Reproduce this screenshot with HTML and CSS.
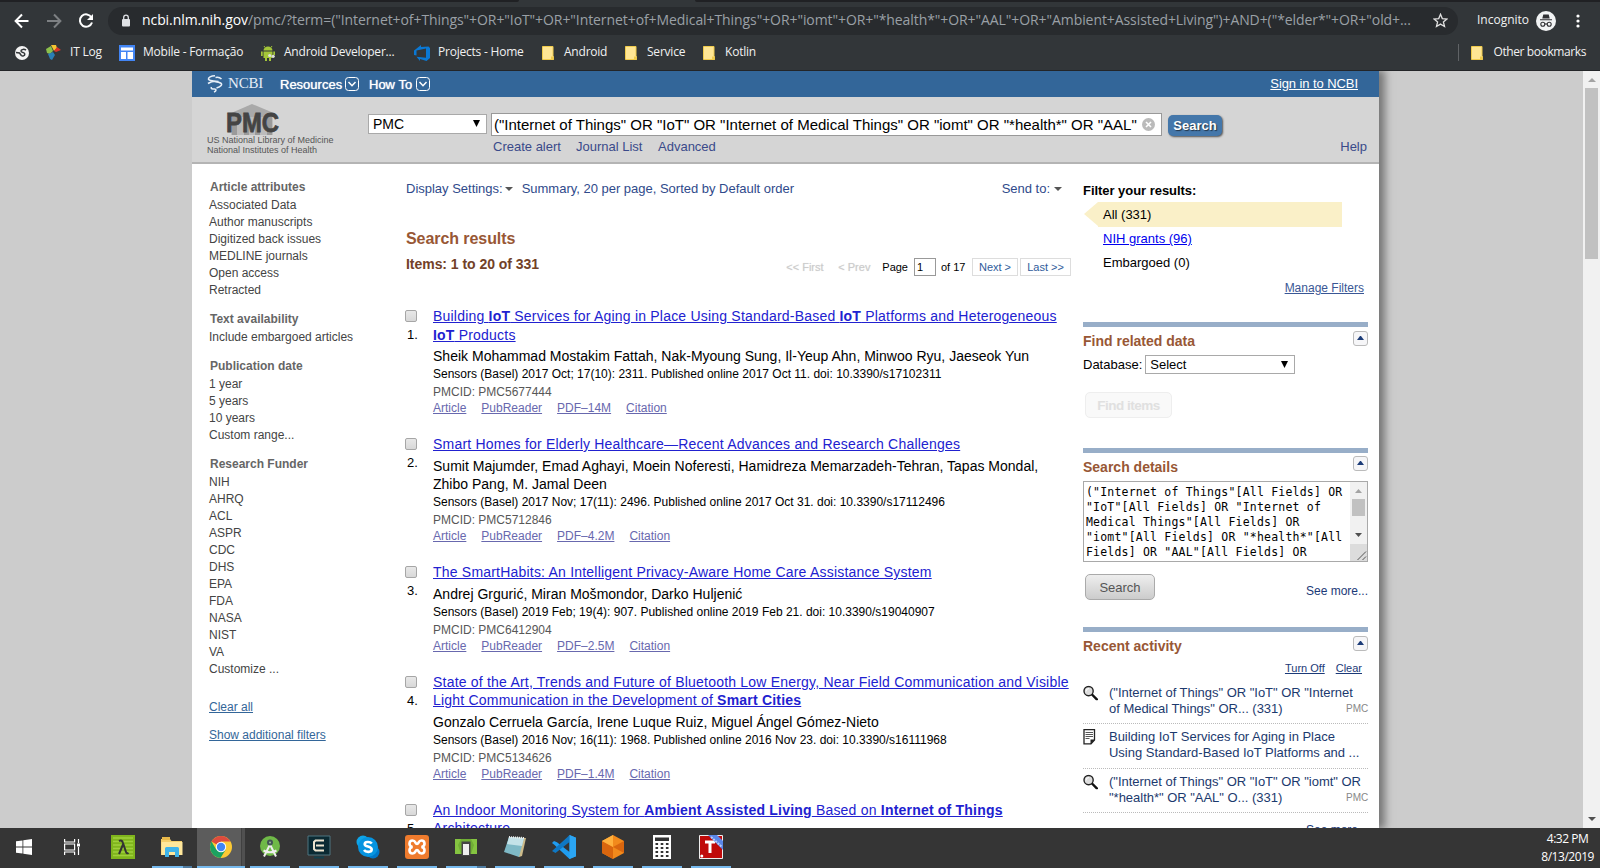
FILE: index.html
```html
<!DOCTYPE html>
<html lang="en">
<head>
<meta charset="utf-8">
<title>Search results - PMC - NCBI</title>
<link rel="stylesheet" href="styles.css">
</head>
<body>
<svg class="defs" width="0" height="0">
  <symbol id="folder" viewBox="0 0 12 14"><path d="M.5.5h10.500v9l.6 1v3H.5z" fill="#ffe694" stroke="#f0cb4c"/><path d="M9 10.500h2.500V14H9z" fill="#f0cb4c"/></symbol>
  <symbol id="mag" viewBox="0 0 15 15"><path d="M8.500 8.500l5.300 5.300" stroke="#111" stroke-width="2.400" stroke-linecap="round"/><circle cx="5.600" cy="5.600" r="4.600" fill="#ddd" stroke="#222" stroke-width="1.400"/><path d="M3 6a3 3 0 0 1 3-3" stroke="#fff" fill="none"/></symbol>
  <symbol id="drop" viewBox="0 0 14 14"><rect x=".5" y=".5" width="13" height="13" rx="3" fill="none" stroke="#fff"/><path d="M3.500 5l3.500 3.700L10.500 5" fill="none" stroke="#fff" stroke-width="1.500"/></symbol>
  <symbol id="arrow" viewBox="0 0 7 7"><path d="M0 0h7L3.500 7z" fill="#000"/></symbol>
</svg>

<div class="browser">
  <div class="tabstrip"><i class="tab-l"></i><i class="tab-r"></i></div>
  <div class="toolbar">
    <svg class="nav" width="100" height="28" viewBox="0 0 100 28" fill="none" stroke-width="2">
      <path d="M28.500 14H16M22 7.500L15.600 14l6.400 6.500" stroke="#fff"/>
      <path d="M47 14h12.500M54 7.500l6.400 6.500-6.400 6.500" stroke="#7d8083"/>
      <path d="M91.500 10.500A6.200 6.200 0 1 0 92 15.500" stroke="#fff"/><path d="M93 7v6h-6z" fill="#fff"/>
    </svg>
    <div class="omnibox">
      <svg width="10" height="13" viewBox="0 0 10 13"><rect x="1" y="5" width="8" height="7.500" rx="1" fill="#dfe1e5"/><path d="M2.700 6V3.500a2.300 2.300 0 0 1 4.600 0V6" fill="none" stroke="#dfe1e5" stroke-width="1.300"/></svg>
      <span class="url"><b>ncbi.nlm.nih.gov</b>/pmc/?term=("Internet+of+Things"+OR+"IoT"+OR+"Internet+of+Medical+Things"+OR+"iomt"+OR+"*health*"+OR+"AAL"+OR+"Ambient+Assisted+Living")+AND+("*elder*"+OR+"old+...</span>
      <svg class="star" width="15" height="15" viewBox="0 0 15 15"><path d="M7.500 1.300l1.800 4.300 4.600.4-3.500 3 1.100 4.500-4-2.400-4 2.400L4.600 9 1.100 6l4.600-.4z" fill="none" stroke="#e0e0e0" stroke-width="1.300"/></svg>
    </div>
    <span class="incognito">Incognito</span>
    <svg class="avatar" width="20" height="20" viewBox="0 0 20 20"><circle cx="10" cy="10" r="10" fill="#f1f3f4"/><path d="M4 9.300h12v-1H4zM6.300 7.500l1-4h5.400l1 4z" fill="#303134"/><g fill="none" stroke="#303134" stroke-width="1.100"><circle cx="6.800" cy="13.300" r="2"/><circle cx="13.200" cy="13.300" r="2"/><path d="M8.800 13h2.400"/></g></svg>
    <svg class="dots" width="4" height="16" viewBox="0 0 4 16" fill="#fff"><circle cx="2" cy="3" r="1.600"/><circle cx="2" cy="8" r="1.600"/><circle cx="2" cy="13" r="1.600"/></svg>
  </div>
  <div class="bookmarks">
    <span class="bm bm-globe"><svg width="14" height="14" viewBox="0 0 14 14"><circle cx="7" cy="7" r="7" fill="#f4f4f4"/><path d="M11 4.200C9.500 3 6 3 6 5s3.800 1 3.800 3-2.300 2.500-3.500 1.500L4.500 7 1 6.500" stroke="#323639" stroke-width="1.500" fill="none"/></svg></span>
    <span class="bm bm-itlog"><svg width="16" height="15" viewBox="0 0 16 15"><path d="M0 4l5-3 2 5-3 3-3-1z" fill="#8cc04b"/><path d="M5 0h5l1 3-3 3z" fill="#f4c430"/><path d="M11 2l4 3-5 2-2-1z" fill="#d8352a"/><path d="M2 9l5-2 2 3-3 5-2-1z" fill="#2b7fb5"/></svg><span>IT Log</span></span>
    <span class="bm bm-mobile"><svg width="16" height="16" viewBox="0 0 16 16"><path d="M0 0h16v16H0z" fill="#4285f4"/><path d="M2 2.500h12v3H2zM2 7h5v7H2zM8.500 7H14v7H8.500z" fill="#fff"/></svg><span>Mobile - Formação</span></span>
    <span class="bm bm-dev"><svg width="14" height="16" viewBox="0 0 14 16"><path d="M3 1l1 1.500M11 1l-1 1.500" stroke="#a4c639"/><path d="M2.500 5.500a4.500 4 0 0 1 9 0zM2.500 6.500h9V13h-9zM0 6.500h1.700V11H0zM12.300 6.500H14V10h-1.700zM4 13h2v3H4zM8 13h2v3H8z" fill="#a4c639"/><circle cx="8.700" cy="10.500" r="1.600" fill="#ddd"/><circle cx="12.200" cy="11.300" r="1.600" fill="#ddd"/></svg><span>Android Developer...</span></span>
    <span class="bm bm-proj"><svg width="16" height="16" viewBox="0 0 16 16"><path d="M0 5.500L2 4l5-4v2l7.500-.5L16 3v10l-3.500 3L6 14v2l-3.500-4.200 9.500.9V3.500L2.500 5.600v5L0 10z" fill="#0a78d4"/></svg><span>Projects - Home</span></span>
    <span class="bm bm-and"><svg width="12" height="14"><use href="#folder"/></svg><span>Android</span></span>
    <span class="bm bm-serv"><svg width="12" height="14"><use href="#folder"/></svg><span>Service</span></span>
    <span class="bm bm-kot"><svg width="12" height="14"><use href="#folder"/></svg><span>Kotlin</span></span>
    <span class="bm bm-other"><svg width="12" height="14"><use href="#folder"/></svg><span>Other bookmarks</span></span>
  </div>
</div>

<div class="viewport">
  <div class="page">
    <div class="ncbi-bar">
      <svg width="16" height="18" viewBox="0 0 16 18" fill="none" stroke="#e6eef7" stroke-width="1.600"><path d="M8 .8C4 .8 1 2.500 1.500 4.200S11 6.500 13.500 8 14 11.500 9.500 13M1 8.500C4 6.500 8 6 11.500 6.500M14.500 4c-2-2-4-2-6-1.500M4.500 12c-1 2 1 2 3 2s2 2-.5 3"/></svg>
      <span class="ncbi">NCBI</span>
      <span class="menu res">Resources</span><svg width="14" height="14"><use href="#drop"/></svg>
      <span class="menu how">How To</span><svg width="14" height="14"><use href="#drop"/></svg>
      <a class="signin">Sign in to NCBI</a>
    </div>
    <div class="header">
      <div class="brand">
        <svg width="56" height="31" viewBox="0 0 56 31"><path d="M26 0L50 10v3H3v-3z" fill="#a9a9a9"/><path d="M5 13h42v18H5z" fill="#bcbcbc"/><path d="M6 13h5v18H6zM18 13h5v18h-5zM29 13h5v18h-5zM41 13h5v18h-5z" fill="#9a9a9a"/><text class="pmc" x="0" y="27.500" textLength="53" lengthAdjust="spacingAndGlyphs">PMC</text></svg>
        <div>US National Library of Medicine</div>
        <div>National Institutes of Health</div>
      </div>
      <div class="search">
        <div class="search-row">
          <div class="select db">PMC<svg width="7" height="7"><use href="#arrow"/></svg></div>
          <div class="query"><span>("Internet of Things" OR "IoT" OR "Internet of Medical Things" OR "iomt" OR "*health*" OR "AAL"</span>
            <svg width="13" height="13" viewBox="0 0 13 13"><circle cx="6.500" cy="6.500" r="6.500" fill="#bbb"/><path d="M4 4l5 5M9 4L4 9" stroke="#fff" stroke-width="1.600"/></svg></div>
          <div class="go">Search</div>
        </div>
        <div class="search-links"><span class="l1">Create alert</span><span class="l2">Journal List</span><span class="l3">Advanced</span><span class="help">Help</span></div>
      </div>
    </div>
    <div class="columns">
      <div class="facets">
        <h3>Article attributes</h3><p>Associated Data</p><p>Author manuscripts</p><p>Digitized back issues</p><p>MEDLINE journals</p><p>Open access</p><p>Retracted</p>
        <h3>Text availability</h3><p>Include embargoed articles</p>
        <h3>Publication date</h3><p>1 year</p><p>5 years</p><p>10 years</p><p>Custom range...</p>
        <h3>Research Funder</h3><p>NIH</p><p>AHRQ</p><p>ACL</p><p>ASPR</p><p>CDC</p><p>DHS</p><p>EPA</p><p>FDA</p><p>NASA</p><p>NIST</p><p>VA</p><p>Customize ...</p>
        <a class="clear-all">Clear all</a><a class="show-more">Show additional filters</a>
      </div>
      <div class="results">
        <div class="display"><span>Display Settings:</span><i class="caret"></i><span>Summary, 20 per page, Sorted by Default order</span><span class="send">Send to:</span><i class="caret"></i></div>
        <h2>Search results</h2>
        <div class="count-row"><h4>Items: 1 to 20 of 331</h4>
          <div class="pager"><span class="off first">&lt;&lt; First</span><span class="off prev">&lt; Prev</span><span>Page</span><span class="pgbox">1</span><span class="of">of 17</span><span class="pgbtn next">Next &gt;</span><span class="pgbtn last">Last &gt;&gt;</span></div>
        </div>
        <div class="item"><div class="num"><i class="cb"></i>1.</div><div class="body">
          <a class="title">Building <b>IoT</b> Services for Aging in Place Using Standard-Based <b>IoT</b> Platforms and Heterogeneous<br><b>IoT</b> Products</a>
          <div class="authors">Sheik Mohammad Mostakim Fattah, Nak-Myoung Sung, Il-Yeup Ahn, Minwoo Ryu, Jaeseok Yun</div>
          <div class="src">Sensors (Basel) 2017 Oct; 17(10): 2311. Published online 2017 Oct 11. doi: 10.3390/s17102311</div>
          <div class="pmcid">PMCID: PMC5677444</div>
          <div class="links"><a>Article</a><a>PubReader</a><a>PDF–14M</a><a>Citation</a></div></div></div>
        <div class="item"><div class="num"><i class="cb"></i>2.</div><div class="body">
          <a class="title">Smart Homes for Elderly Healthcare—Recent Advances and Research Challenges</a>
          <div class="authors">Sumit Majumder, Emad Aghayi, Moein Noferesti, Hamidreza Memarzadeh-Tehran, Tapas Mondal,<br>Zhibo Pang, M. Jamal Deen</div>
          <div class="src">Sensors (Basel) 2017 Nov; 17(11): 2496. Published online 2017 Oct 31. doi: 10.3390/s17112496</div>
          <div class="pmcid">PMCID: PMC5712846</div>
          <div class="links"><a>Article</a><a>PubReader</a><a>PDF–4.2M</a><a>Citation</a></div></div></div>
        <div class="item"><div class="num"><i class="cb"></i>3.</div><div class="body">
          <a class="title">The SmartHabits: An Intelligent Privacy-Aware Home Care Assistance System</a>
          <div class="authors">Andrej Grgurić, Miran Mošmondor, Darko Huljenić</div>
          <div class="src">Sensors (Basel) 2019 Feb; 19(4): 907. Published online 2019 Feb 21. doi: 10.3390/s19040907</div>
          <div class="pmcid">PMCID: PMC6412904</div>
          <div class="links"><a>Article</a><a>PubReader</a><a>PDF–2.5M</a><a>Citation</a></div></div></div>
        <div class="item"><div class="num"><i class="cb"></i>4.</div><div class="body">
          <a class="title">State of the Art, Trends and Future of Bluetooth Low Energy, Near Field Communication and Visible<br>Light Communication in the Development of <b>Smart Cities</b></a>
          <div class="authors">Gonzalo Cerruela García, Irene Luque Ruiz, Miguel Ángel Gómez-Nieto</div>
          <div class="src">Sensors (Basel) 2016 Nov; 16(11): 1968. Published online 2016 Nov 23. doi: 10.3390/s16111968</div>
          <div class="pmcid">PMCID: PMC5134626</div>
          <div class="links"><a>Article</a><a>PubReader</a><a>PDF–1.4M</a><a>Citation</a></div></div></div>
        <div class="item"><div class="num"><i class="cb"></i>5.</div><div class="body">
          <a class="title">An Indoor Monitoring System for <b>Ambient Assisted Living</b> Based on <b>Internet of Things</b><br>Architecture</a></div></div>
      </div>
      <div class="side">
        <h5>Filter your results:</h5>
        <div class="filter on">All (331)</div>
        <div class="filter"><a>NIH grants (96)</a></div>
        <div class="filter">Embargoed (0)</div>
        <a class="manage">Manage Filters</a>
        <div class="portlet related">
          <div class="phead"><span>Find related data</span><i class="toggle"></i></div>
          <div class="dbrow">Database: <div class="select rel">Select<svg width="7" height="7"><use href="#arrow"/></svg></div></div>
          <div class="btn disabled">Find items</div>
        </div>
        <div class="portlet details">
          <div class="phead"><span>Search details</span><i class="toggle"></i></div>
          <div class="textarea"><pre>("Internet of Things"[All Fields] OR
"IoT"[All Fields] OR "Internet of
Medical Things"[All Fields] OR
"iomt"[All Fields] OR "*health*"[All
Fields] OR "AAL"[All Fields] OR</pre>
            <svg width="17" height="79" viewBox="0 0 17 79"><path d="M0 0h17v62H0z" fill="#f1f1f1"/><path d="M0 62h17v17H0z" fill="#dcdcdc"/><path d="M2 17h13v17H2z" fill="#c1c1c1"/><path d="M5 11h7L8.500 7z" fill="#a3a3a3"/><path d="M5 51h7l-3.500 4z" fill="#505050"/><path d="M7.500 78L16 69.500M12.500 78l3.500-3.500" stroke="#555"/></svg></div>
          <div class="drow"><div class="btn">Search</div><span>See more...</span></div>
        </div>
        <div class="portlet recent">
          <div class="phead"><span>Recent activity</span><i class="toggle"></i></div>
          <div class="rlinks"><a>Turn Off</a><a>Clear</a></div>
          <div class="act"><svg width="15" height="16" viewBox="0 0 15 15"><use href="#mag"/></svg><div>("Internet of Things" OR "IoT" OR "Internet<br>of Medical Things" OR... (331)</div><em>PMC</em></div>
          <div class="act"><svg width="15" height="16" viewBox="0 0 15 16"><path d="M1 .700h10.500V11L8 14.800H1z" fill="#fff" stroke="#222" stroke-width="1.300"/><path d="M2.500 3.500h7.500M2.500 5.500h7.500M2.500 7.500h7.500M2.500 9.500h4" stroke="#555"/><path d="M7.500 15v-4.500H12z" fill="#222"/></svg><div>Building IoT Services for Aging in Place<br>Using Standard-Based IoT Platforms and ...</div></div>
          <div class="act"><svg width="15" height="16" viewBox="0 0 15 15"><use href="#mag"/></svg><div>("Internet of Things" OR "IoT" OR "iomt" OR<br>"*health*" OR "AAL" O... (331)</div><em>PMC</em></div>
          <div class="more">See more...</div>
        </div>
      </div>
    </div>
  </div>
  <div class="scrollbar"><i class="up"></i><i class="thumb"></i><i class="down"></i></div>
</div>

<div class="taskbar">
  <span class="app start"><svg width="16" height="16" viewBox="0 0 16 16" fill="#fff"><path d="M0 2.300l6.500-.9v6.100H0zM7.300 1.200L16 0v7.500H7.300zM0 8.400h6.500v6.200L0 13.700zM7.300 8.400H16V16l-8.700-1.200z"/></svg></span>
  <span class="app view"><svg width="16" height="16" viewBox="0 0 16 16" fill="none" stroke="#fff" stroke-width="1.200"><path d="M.6 0v3h10V0M.6 16v-3h10v3M.6 5h10v6H.6zM14.500 0v4M14.500 8v8"/><path d="M13 4.500h3v3h-3z" fill="#fff" stroke="none"/></svg></span>
  <span class="app"><svg width="24" height="24" viewBox="0 0 24 24"><path d="M0 0h24v24H0z" fill="#7fb51c"/><path d="M2 3h20M2 6.500h20M2 10h20M2 13.500h20M2 17h20M2 20.500h20" stroke="#a0cf3c" stroke-width="1.500"/><path d="M8 6q3-1.500 4 2l3 9q.7 2 2.500.8M12 9.500L8 19" fill="none" stroke="#333" stroke-width="2"/></svg></span>
  <span class="app run dual"><svg width="24" height="20" viewBox="0 0 24 20"><path d="M1 2h9l1.500 2H22v14H1z" fill="#f5cf6b"/><path d="M2 0h8v3H2z" fill="#e8b94a"/><path d="M1.500 5h21v13h-21z" fill="#ffe79b"/><path d="M5 20v-8.500q0-1.500 1.500-1.500h11q1.500 0 1.500 1.500V20h-4v-5H9v5z" fill="#3fb4ea"/></svg></span>
  <span class="app run active"><svg width="24" height="24" viewBox="0 0 24 24"><circle cx="12" cy="12" r="11" fill="#fcc934"/><path d="M12 12L2.500 6.500A11 11 0 0 1 21.500 6.500H12z" fill="#dd4b3e"/><path d="M2.500 6.500A11 11 0 0 0 11.500 23L16.800 14.500 7.200 14.500z" fill="#1ba261"/><circle cx="12" cy="12" r="5.200" fill="#fff"/><circle cx="12" cy="12" r="4.200" fill="#4285f4"/></svg></span>
  <span class="app run"><svg width="22" height="24" viewBox="0 0 22 24"><circle cx="11" cy="11" r="10" fill="#6fb947"/><path d="M11 9.500L5 21.500M11 9.500l6 12M4.500 15.500q6.500 3.500 13 0" fill="none" stroke="#eee" stroke-width="2"/><circle cx="11" cy="7.500" r="3" fill="#455"/><circle cx="11" cy="7.500" r="1" fill="#9b9"/></svg></span>
  <span class="app run"><svg width="24" height="24" viewBox="0 0 24 24"><path d="M1 1h22v19H1z" fill="#0b2a33" stroke="#4e7480"/><path d="M17 5.500H8.500L7 7v7l1.500 1.500H17M9 10.500h8" fill="none" stroke="#eee4cf" stroke-width="2"/><path d="M7 22.500h10" stroke="#13404d" stroke-width="2"/></svg></span>
  <span class="app run"><svg width="24" height="24" viewBox="0 0 24 24"><circle cx="7" cy="7" r="6.500" fill="#0ea5e9"/><circle cx="17" cy="17" r="6.500" fill="#0077c8"/><circle cx="12" cy="12" r="10" fill="#0694e0"/><path d="M15.800 8.500C14 6.200 8.500 6.500 8.700 9.300c.2 3 7 1.600 7 5.200 0 3-5.800 3.200-7.700.5" fill="none" stroke="#fff" stroke-width="2.600"/></svg></span>
  <span class="app run"><svg width="24" height="24" viewBox="0 0 24 24"><rect width="24" height="24" rx="3" fill="#ef7b2d"/><path d="M7.500 12C3 11 4 5.500 7.500 5.500S10 9 12 9s1-3.500 4.500-3.500S21 11 16.500 12c4.500 1 3.500 6.500 0 6.500S14 15 12 15s-1 3.500-4.500 3.500S3 13 7.500 12z" fill="none" stroke="#fff" stroke-width="2.600"/></svg></span>
  <span class="app run dual"><svg width="22" height="20" viewBox="0 0 22 20"><path d="M0 2h22v15H0z" fill="#6fae34"/><path d="M0 2h6l-3 6 3 9H0zM22 2h-6l3 6-3 9h6z" fill="#85c441"/><path d="M6.500 4.500h9V19h-9z" fill="#444"/><path d="M8 7h6v11H8z" fill="#eee"/></svg></span>
  <span class="app run"><svg width="24" height="24" viewBox="0 0 24 24"><path d="M6 2l17 1-4 18-3 1z" fill="#cdbb8a"/><path d="M6 2l15 1-5 19L1 17z" fill="#7fb9c6"/><path d="M6 2l15 1-2 8-15-2z" fill="#c4e2e8"/><path d="M6 2l15 1" stroke="#eee" stroke-width="2" stroke-dasharray="1 1"/></svg></span>
  <span class="app run"><svg width="24" height="24" viewBox="0 0 24 24"><path d="M17.500 0L24 2.800v18.400L17.500 24 2 9.500 0 8l2-2 3 1.300L17.500 17z" fill="#1f9cf0"/><path d="M17.500 0v7L3.500 18 0 16l15-13.500z" fill="#0f78c4"/><path d="M17.500 0L24 2.800v18.400L17.500 24z" fill="#2ba5f3"/></svg></span>
  <span class="app run"><svg width="22" height="24" viewBox="0 0 22 24"><path d="M11 0l11 6v12l-11 6-11-6V6z" fill="#f28a1c"/><path d="M11 12L22 6v12zM11 12L0 18l11 6zM11 12L0 6v12z" fill="#d9660e"/><path d="M11 12L0 6l11-6z" fill="#ffb13d"/></svg></span>
  <span class="app run"><svg width="18" height="24" viewBox="0 0 18 24"><path d="M0 0h18v24H0z" fill="#fff"/><path d="M2 2.500h14v3.500H2z" fill="#333"/><path d="M2.500 9h13M2.500 13h13M2.500 17h13M2.500 21h13" stroke="#333" stroke-width="2.200" stroke-dasharray="2.600 2.600"/></svg></span>
  <span class="app run"><svg width="24" height="24" viewBox="0 0 24 24"><path d="M.5.5h23v23H.5z" fill="#c00a0a" stroke="#eee"/><path d="M6 7h10M11 7v11" stroke="#fff" stroke-width="3"/><path d="M9 0h9l6 6v9z" fill="#5a86e8"/><path d="M12 2l11 10" stroke="#b8cdf8" stroke-dasharray="2 1" stroke-width="2"/><circle cx="2.800" cy="21" r="1.500" fill="#fff"/></svg></span>
  <div class="clock"><span>4:32 PM</span><span>8/13/2019</span></div>
</div>
</body>
</html>
```
FILE: styles.css
```css
* { box-sizing: border-box; }
html, body { margin: 0; height: 868px; overflow: hidden; }
body { display: flex; flex-direction: column; font-family: "Liberation Sans", Arial, sans-serif; font-size: 13px; color: #000; background: #ccc; }
h2, h3, h4, h5, p, pre { margin: 0; }
svg { display: block; flex: none; }
i, em { font-style: normal; }
a { text-decoration: underline; }
.defs { position: absolute; }

/* browser chrome */
.browser { flex: none; height: 71px; background: #323639; border-bottom: 1px solid #232528; color: #f1f1f1; font-family: "Open Sans", "Noto Sans", sans-serif; }
.tabstrip { height: 2px; display: flex; justify-content: space-between; }
.tab-l { width: 519px; background: #202124; border-radius: 0 0 4px 0; }
.tab-r { width: 905px; background: #202124; border-radius: 0 0 0 4px; }
.toolbar { height: 37px; display: flex; align-items: center; }
.nav { margin-right: 8px; }
.omnibox { width: 1350px; height: 28px; border-radius: 14px; background: #282b2e; display: flex; align-items: center; padding: 0 12px 0 13px; }
.url { margin-left: 11px; font-size: 14px; color: #9aa0a6; white-space: nowrap; width: 1282px; letter-spacing: -.08px; line-height: 20px; flex: none; padding-bottom: 1px; }
.url b { font-weight: 400; color: #fff; }
.star { margin-left: 9px; }
.incognito { font-size: 12px; margin-left: 19px; width: 50px; white-space: nowrap; line-height: 18px; padding-bottom: 1px; }
.avatar { margin-left: 9px; }
.dots { margin-left: 20px; }
.bookmarks { height: 27px; display: flex; align-items: center; font-size: 12px; padding-left: 15px; letter-spacing: -.22px; }
.bm { display: flex; align-items: center; gap: 8px; white-space: nowrap; }
.bm span { padding-bottom: 2px; }
.bm-globe { width: 31px; }
.bm-itlog { width: 73px; }
.bm-mobile { width: 142px; }
.bm-dev { width: 153px; gap: 9px; }
.bm-proj { width: 128px; }
.bm-and, .bm-serv, .bm-kot, .bm-other { gap: 10px; }
.bm-and { width: 83px; }
.bm-serv { width: 78px; }
.bm-other { margin-left: auto; margin-right: 14px; border-left: 1px solid #606366; padding-left: 12px; height: 17px; letter-spacing: -.4px; }

/* page */
.viewport { flex: none; height: 757px; display: flex; justify-content: space-between; overflow: hidden; background: #ccc; }
.page { width: 1187px; margin-left: 192px; background: #fff; box-shadow: 5px 0 8px 1px #777; clip-path: inset(0 -30px 0 0); }
.ncbi-bar { height: 26px; background: #336699; color: #fff; display: flex; align-items: center; padding: 0 21px 0 15px; }
.ncbi { font: 15px "Liberation Serif", serif; margin-left: 5px; width: 53px; color: #e6eef7; letter-spacing: -.2px; padding-bottom: 2px; }
.menu { text-shadow: 0 0 1px #fff; }
.res { width: 65px; margin-left: -1px; }
.how { width: 47px; margin-left: 10px; }
.signin { margin-left: auto; margin-top: -2px; letter-spacing: -.08px; }
.header { height: 67px; background: #d5d5d5; border-bottom: 2px solid #b4b4b4; display: flex; padding: 7px 12px 0 15px; }
.brand { width: 161px; font-size: 9px; line-height: 10px; color: #555; white-space: nowrap; }
.brand svg { margin: 0 0 0 19px; overflow: visible; }
.pmc { font: bold 27px "Liberation Sans", sans-serif; fill: #444; stroke: #444; stroke-width: .8px; }
.search { flex: 1; padding-top: 9px; }
.search-row { display: flex; align-items: center; }
.select { display: flex; justify-content: space-between; align-items: center; background: #fff; border: 1px solid #a9a9a9; padding: 0 6px 0 4px; }
.db { width: 119px; height: 20px; font-size: 14px; margin-top: -2px; }
.query { width: 671px; height: 23px; margin-left: 4px; border: 1px solid #999; background: #fff; display: flex; justify-content: space-between; align-items: center; padding: 0 6px 0 2px; font-size: 15px; white-space: nowrap; }
.go { margin-left: 6px; width: 54px; height: 21px; border-radius: 5px; background: #4477aa; color: #fff; font-weight: bold; line-height: 21px; text-align: center; box-shadow: 1px 1px 2px #555; text-shadow: 1px 1px 1px #234; margin-top: 1px; }
.search-links { display: flex; line-height: 18px; color: #3a4a8a; padding-left: 125px; margin-top: 2px; }
.l1 { width: 83px; } .l2 { width: 82px; }
.help { margin-left: auto; }
.columns { display: flex; }

/* facets */
.facets { width: 213px; padding: 15px 0 0 18px; font-size: 12px; line-height: 17px; color: #444; margin-left: -1px; white-space: nowrap; }
.facets h3 { font-size: 12px; color: #666; margin: 12px 0 1px 1px; }
.facets h3:first-child { margin-top: 0; }
.facets a { display: block; color: #369; }
.clear-all { margin-top: 21px; }
.show-more { margin-top: 11px; }

/* results */
.results { width: 667px; padding-left: 2px; }
.display { display: flex; align-items: center; margin-top: 14px; height: 20px; color: #2f4a8b; padding-right: 9px; white-space: nowrap; letter-spacing: -.01px; }
.caret { border: 4px solid transparent; border-top-color: #555; border-bottom: 0; margin: 2px 9px 0 2px; }
.send { margin-left: auto; }
.send + .caret { margin-right: 0; margin-left: 4px; }
.results h2 { font-size: 16px; line-height: 20px; color: #985735; margin-top: 31px; letter-spacing: -.07px; }
.count-row { display: flex; justify-content: space-between; margin-top: 9px; height: 18px; }
.results h4 { font-size: 14px; line-height: 12px; color: #724128; white-space: nowrap; letter-spacing: -.04px; }
.pager { display: flex; font-size: 11px; line-height: 18px; white-space: nowrap; }
.off { color: #ccc; text-shadow: 0 0 1px #ddd; }
.first { width: 52px; } .prev { width: 44px; }
.pgbox { width: 22px; border: 1px solid #999; margin-left: 6px; padding-left: 2px; line-height: 16px; }
.of { width: 31px; margin-left: 5px; }
.pgbtn { border: 1px solid #ddd; color: #2f5b9b; line-height: 16px; text-align: center; }
.next { width: 46px; } .last { width: 51px; margin-left: 2px; }
.item { display: flex; padding-bottom: 19px; }
.count-row + .item { margin-top: 31px; }
.num { width: 28px; font-size: 13px; line-height: 18.500px; padding: 3px 0 0 1px; flex: none; }
.cb { display: block; width: 12px; height: 12px; border: 1px solid #a6a6a6; border-radius: 2px; background: linear-gradient(#e8e8e8, #d8d8d8); margin: 0 0 4px -2px; }
.body { white-space: nowrap; margin-left: -1px; }
.title { display: block; font-size: 14px; line-height: 18.500px; color: #2121d0; letter-spacing: .205px; }
.authors { font-size: 14px; line-height: 18.500px; margin-top: 3px; letter-spacing: .01px; }
.src { font-size: 12px; line-height: 17px; margin-top: .5px; }
.pmcid { font-size: 12px; line-height: 17px; color: #575757; margin-top: 1px; }
.links { display: flex; gap: 15px; font-size: 12px; line-height: 15px; color: #6868ae; }

/* side */
.side { width: 285px; margin-left: 12px; padding-top: 17px; white-space: nowrap; }
.side h5 { font-size: 13px; line-height: 19px; height: 18px; letter-spacing: -.04px; }
.filter { width: 244px; margin-left: 15px; padding-left: 5px; line-height: 24px; position: relative; }
.on { background: #faf0c8; height: 25px; margin-top: 3px; line-height: 25px; }
.on::before { content: ""; position: absolute; left: -14px; top: 0; border: 12.500px solid transparent; border-right: 14px solid #faf0c8; border-left: 0; }
.filter a { color: #00e; }
.manage { display: block; text-align: right; padding-right: 4px; font-size: 12px; line-height: 16px; margin-top: 5px; color: #3a5795; }
.portlet { border-top: 5px solid #98aec8; }
.phead { display: flex; justify-content: space-between; height: 28px; padding-top: 4px; color: #985735; font-weight: bold; font-size: 14px; line-height: 20px; }
.toggle { width: 15px; height: 15px; border: 1px solid #bbb; border-radius: 3px; background: #f6f6f8; padding: 4px 3px; }
.toggle::before { content: ""; display: block; border: 3.500px solid transparent; border-bottom: 4px solid #1c3c78; border-top: 0; }
.related { margin-top: 26px; height: 126px; }
.dbrow { display: flex; align-items: center; gap: 3px; height: 19px; }
.rel { width: 150px; height: 19px; }
.btn { width: 70px; height: 26px; border: 1px solid #aaa; border-radius: 5px; background: linear-gradient(#eee, #ccc); color: #555; text-align: center; line-height: 25px; margin-left: 2px; }
.disabled { width: 87px; margin-top: 18px; font-weight: bold; color: #e0e0e0; border-color: #eee; background: #f9f9f9; letter-spacing: -.5px; font-size: 13.500px; }
.details { height: 179px; }
.details .toggle { margin-top: -1px; }
.textarea { height: 81px; border: 1px solid #a9a9a9; display: flex; justify-content: space-between; }
.textarea pre { font: 11.500px/15px "DejaVu Sans Mono", monospace; padding: 3px 0 0 2px; letter-spacing: .2px; }
.drow { display: flex; justify-content: space-between; margin-top: 12px; font-size: 12px; line-height: 34px; height: 32px; color: #1c3a78; }
.drow .btn { font-size: 13px; }
.rlinks { display: flex; justify-content: flex-end; gap: 11px; font-size: 11px; line-height: 16px; padding-right: 6px; color: #1c3a78; }
.act { display: flex; line-height: 16px; font-size: 13px; color: #1c3a6e; border-bottom: 1px dotted #bbb; height: 44.500px; padding-top: 5px; }
.act div { margin-left: 11px; width: 236px; flex: none; letter-spacing: -.02px; }
.rlinks + .act { margin-top: 4px; height: 44px; }
.act em { margin-left: auto; font-size: 10px; color: #888; padding-top: 16px; letter-spacing: -.1px; }
.more { text-align: right; color: #1c3a78; font-size: 12px; line-height: 16px; margin-top: 9px; }
.scrollbar { width: 17px; background: #f1f1f1; display: flex; flex-direction: column; align-items: center; padding-top: 7px; }
.up { border: 4px solid transparent; border-bottom-color: #a3a3a3; border-top: 0; }
.thumb { width: 13px; height: 171px; background: #c1c1c1; margin-top: 6px; }
.down { border: 4px solid transparent; border-top-color: #505050; border-bottom: 0; margin-top: auto; margin-bottom: 7px; }

/* taskbar */
.taskbar { flex: none; height: 40px; background: #353535; display: flex; }
.app { width: 40px; margin-right: 9px; display: flex; align-items: center; justify-content: center; border-bottom: 2px solid transparent; }
.start { margin-left: 4px; margin-right: 8px; }
.view { margin-right: 11px; }
.run { border-bottom-color: #76b9ed; }
.dual { border-image: linear-gradient(90deg, #76b9ed 78%, #4f7ba0 78%) 0 0 2 0; }
.active { width: 48px; margin: 0 5px 0 -4px; background: linear-gradient(90deg, #5c5c5c 44px, #404040 44px, #404040 45px, #505050 45px); }
.clock { margin-left: auto; margin-right: 6px; color: #fff; font: 12px/18px "Open Sans", sans-serif; display: flex; flex-direction: column; align-items: center; padding-top: 2px; letter-spacing: -.45px; }
```
